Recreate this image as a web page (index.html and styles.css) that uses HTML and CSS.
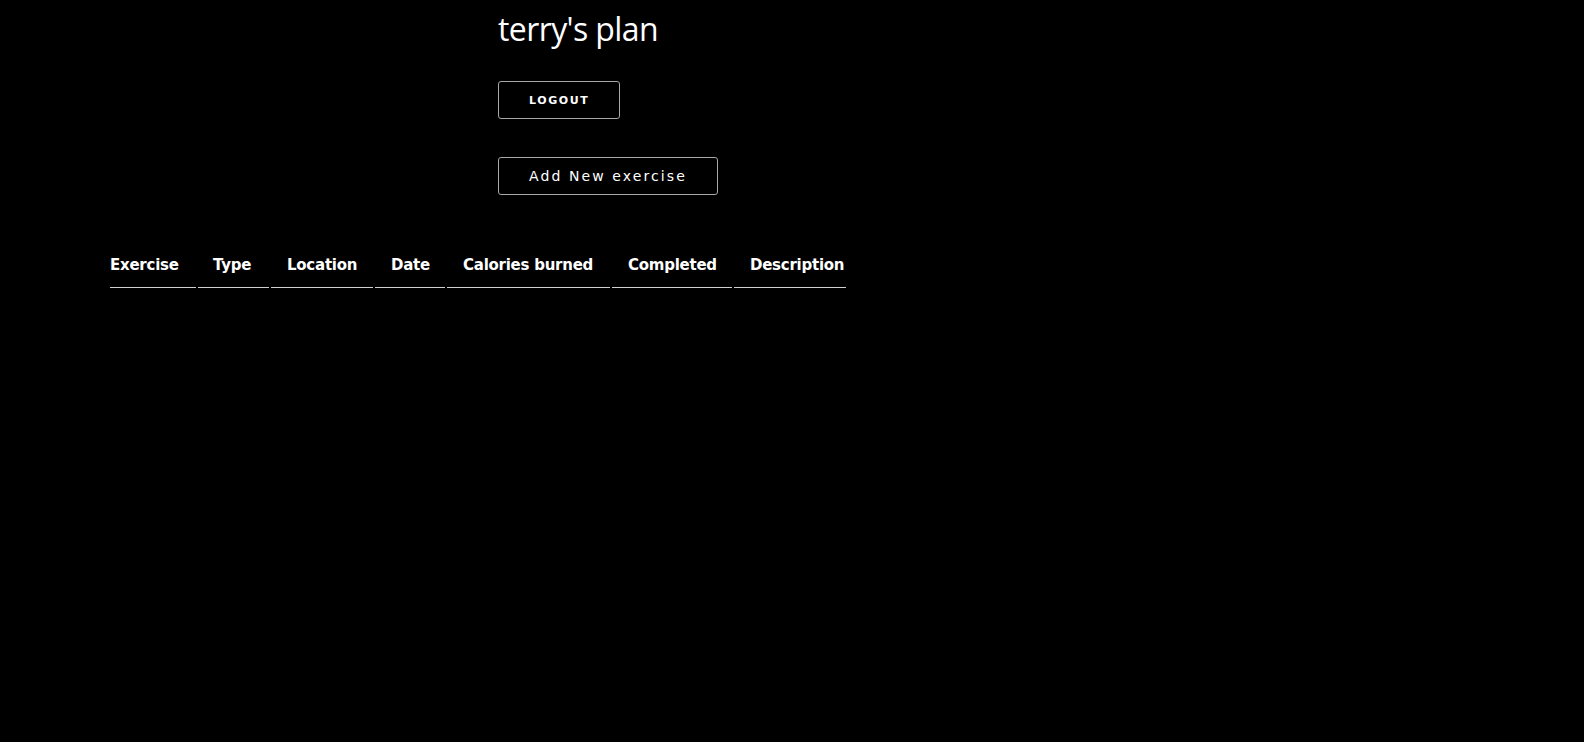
FILE: index.html
```html
<!DOCTYPE html>
<html>
<head>
<meta charset="utf-8">
<link rel="stylesheet" href="styles.css">
</head>
<body>
<div class="top">
  <h1 class="title">terry's plan</h1>
  <button class="btn btn-logout">LOGOUT</button>
  <button class="btn btn-add">Add New exercise</button>
</div>
<table class="plan">
  <thead>
    <tr>
      <th class="c-ex">Exercise</th>
      <th class="c-type">Type</th>
      <th class="c-loc">Location</th>
      <th class="c-date">Date</th>
      <th class="c-cal">Calories burned</th>
      <th class="c-comp">Completed</th>
      <th class="c-desc">Description</th>
    </tr>
  </thead>
  <tbody></tbody>
</table>
</body>
</html>
```
FILE: styles.css
```css
html, body {
  margin: 0;
  padding: 0;
  background: #000;
  color: #fff;
  height: 100%;
}
body {
  font-family: "DejaVu Sans", Verdana, sans-serif;
}
.top {
  display: flex;
  flex-direction: column;
  align-items: flex-start;
  padding-left: 498px;
  padding-top: 9px;
}
.title {
  font-family: "Open Sans", "Noto Sans", sans-serif;
  font-weight: 400;
  font-size: 32px;
  line-height: 40px;
  margin: 0 0 32px 0;
  letter-spacing: -0.6px;
}
.btn {
  background: #000;
  color: #fff;
  border: 1px solid #a8a8a8;
  border-radius: 3px;
  height: 38px;
  padding: 0 30px;
  font-family: "DejaVu Sans", Verdana, sans-serif;
  cursor: pointer;
}
.btn-logout {
  font-size: 11px;
  font-weight: 700;
  letter-spacing: 1.6px;
  margin-bottom: 38px;
}
.btn-add {
  font-size: 14px;
  letter-spacing: 2.1px;
}
.plan {
  margin-top: 59px;
  margin-left: 108px;
  border-collapse: separate;
  border-spacing: 2px;
}
.plan th {
  font-size: 15px;
  font-weight: 700;
  text-align: left;
  padding: 0 2px 13px 16px;
  border-bottom: 1px solid #d0d0d0;
  white-space: nowrap;
  box-sizing: border-box;
  letter-spacing: -0.25px;
}
.plan th.c-ex { padding-left: 0; width: 86px; }
.plan th.c-type { width: 71px; padding-left: 15px; }
.plan th.c-loc { width: 102px; }
.plan th.c-date { width: 70px; }
.plan th.c-cal { width: 163px; }
.plan th.c-comp { width: 120px; }
.plan th.c-desc { width: 112px; }
```
